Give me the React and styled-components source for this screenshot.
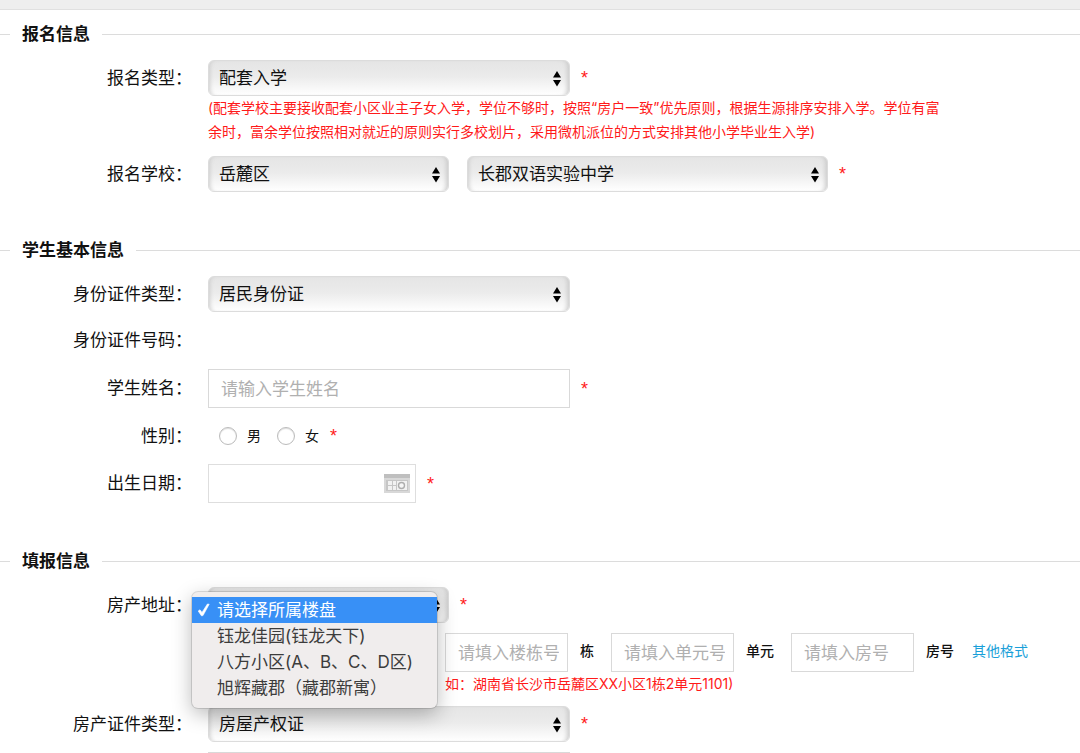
import React, { useState } from 'react';
import styled, { createGlobalStyle } from 'styled-components';

const GlobalStyle = createGlobalStyle`
  * { box-sizing: border-box; }
  html { scrollbar-width: none; }
  body {
    margin: 0;
    background: #fff;
    color: #111;
    font-family: Inter, "Noto Sans CJK SC", sans-serif;
    font-size: 17px;
    line-height: 24px;
  }
  input, select, button { font-family: inherit; }
`;

const Page = styled.main`
  overflow: hidden;
`;

const TopBar = styled.div`
  height: 10px;
  background: #eee;
  border-bottom: 1px solid #e0e0e0;
`;

const Form = styled.form`
  display: flex;
  flex-direction: column;
  gap: 46px;
  padding-top: 12px;
`;

const Section = styled.section`
  display: flex;
  flex-direction: column;
  gap: 14px;
`;

const SectionTitle = styled.h2`
  display: flex;
  align-items: center;
  gap: 12px;
  margin: 0;
  font-size: 17px;
  line-height: 24px;
  font-weight: 700;
  &::before, &::after {
    content: "";
    height: 1px;
    background: #dcdcdc;
  }
  &::before { width: 10px; }
  &::after { flex: 1; }
`;

const Rows = styled.div`
  display: flex;
  flex-direction: column;
  gap: ${p => p.$gap || 12}px;
`;

const Row = styled.div`
  display: grid;
  grid-template-columns: 192px minmax(0, 1fr);
  column-gap: 16px;
`;

const Label = styled.label`
  text-align: right;
  line-height: ${p => p.$height || 36}px;
`;

const Line = styled.div`
  display: flex;
  align-items: center;
  min-height: ${p => p.$height || 36}px;
`;

const Note = styled.p`
  margin: 0;
  padding-left: ${p => p.$indent || 0}px;
  color: #ff1a1a;
  font-size: 14px;
  line-height: 24px;
`;

const Star = styled.span`
  margin-left: 11px;
  color: #ff1a1a;
  font-family: "Liberation Sans", sans-serif;
  font-size: 18px;
  line-height: 24px;
`;

const SelectBox = styled.div`
  position: relative;
  width: ${p => p.$width}px;
  margin-left: ${p => p.$space || 0}px;
`;

const NativeSelect = styled.select`
  appearance: none;
  display: block;
  width: 100%;
  height: 36px;
  padding: 0 30px 1px 10px;
  border: 1px solid #dcdcdc;
  border-radius: 6px;
  background: linear-gradient(#e5e5e5, #ebebeb 45%, #fff);
  box-shadow: inset 4px 0 4px -3px #ccc, inset -5px 0 4px -3px #ccc;
  color: #111;
  font-size: 17px;
`;

const SelectArrows = styled.svg`
  position: absolute;
  right: 9px;
  top: 11px;
  pointer-events: none;
`;

const TextInput = styled.input`
  width: ${p => p.$width}px;
  height: 39px;
  padding: 0 8px 0 12px;
  border: 1px solid #d9d9d9;
  border-radius: 0;
  background: #fff;
  color: #111;
  font-size: 17px;
  &::placeholder { color: #b0b0b0; opacity: 1; }
`;

const DateBox = styled.div`
  display: flex;
  align-items: center;
  width: 208px;
  height: 39px;
  padding-right: 5px;
  border: 1px solid #dedede;
`;

const DateInput = styled.input`
  flex: 1;
  min-width: 0;
  height: 37px;
  padding: 0 12px;
  border: 0;
  background: none;
  font-size: 17px;
`;

const IconButton = styled.button`
  display: flex;
  padding: 0;
  border: 0;
  background: none;
`;

const RadioGroup = styled.div`
  display: flex;
  align-items: center;
  gap: 16px;
  padding-left: 11px;
`;

const RadioLabel = styled.label`
  display: flex;
  align-items: center;
  gap: 10px;
  font-size: 14px;
  line-height: 24px;
`;

const Radio = styled.input`
  appearance: none;
  width: 18px;
  height: 18px;
  margin: 0;
  border: 1px solid #bbb;
  border-radius: 50%;
  background: #fff;
  box-shadow: inset 0 1px 1px #ddd;
  &:checked { background: radial-gradient(#333 35%, #fff 40%); }
`;

const AddressLine = styled.div`
  display: flex;
  align-items: center;
  margin-top: 10px;
`;

const AddressPart = styled.label`
  display: flex;
  align-items: center;
  gap: 12px;
  margin-left: ${p => p.$space}px;
  font-size: 14px;
  font-weight: 500;
  line-height: 24px;
  white-space: nowrap;
`;

const PartName = styled.span`
  padding-bottom: 4px;
`;

const FormatLink = styled.a`
  margin-left: 18px;
  padding-bottom: 4px;
  color: #1a9fd9;
  font-size: 14px;
  text-decoration: none;
  white-space: nowrap;
`;

const Menu = styled.ul`
  position: absolute;
  z-index: 2;
  left: -16px;
  top: 5px;
  width: 245px;
  margin: 0;
  padding: 5px 0 7px;
  border-radius: 6px;
  background: #f0eded;
  box-shadow: 0 0 0 1px rgba(0, 0, 0, 0.12), 0 6px 20px rgba(0, 0, 0, 0.28);
  list-style: none;
`;

const MenuItem = styled.li`
  display: grid;
  grid-template-columns: 14px 1fr;
  column-gap: 6px;
  align-items: center;
  height: 26px;
  padding-left: 5px;
  background: ${p => (p.$active ? '#3890f6' : 'transparent')};
  color: ${p => (p.$active ? '#fff' : '#3c3c3c')};
  font-size: 17px;
  line-height: 24px;
  white-space: nowrap;
`;

const MenuText = styled.span`
  grid-column: 2;
`;

function Select({ id, width, space, options, children, ...rest }) {
  return (
    <SelectBox $width={width} $space={space}>
      <NativeSelect id={id} {...rest}>
        {options.map(o => <option key={o}>{o}</option>)}
      </NativeSelect>
      <SelectArrows width="8" height="16" viewBox="0 0 8 16" aria-hidden="true">
        <path d="M4 0 8 6.5H0ZM0 9h8L4 15.5Z" fill="#000" />
      </SelectArrows>
      {children}
    </SelectBox>
  );
}

const CheckIcon = () => (
  <svg width="14" height="14" viewBox="0 0 14 14" aria-hidden="true">
    <path d="M1.2 8 3 6.8 5 9.4 10.4 1 12.2 1.2 6 12.6 4.4 12.8Z" fill="#fff" stroke="#fff" strokeWidth="0.6" strokeLinejoin="round" />
  </svg>
);

const CalendarIcon = () => (
  <svg width="26" height="19" viewBox="0 0 26 19" aria-hidden="true">
    <rect width="26" height="19" fill="#d8d8d8" />
    <rect width="26" height="4" fill="#bfbfbf" />
    <rect x="2" y="6" width="22" height="11" fill="#c6c6c6" />
    <path d="M4 7h4v4H4zM9 7h3v4H9zM4 12h4v4H4zM9 12h3v4H9zM13 7h10v9H13z" fill="#f2f2f2" />
    <circle cx="17.5" cy="11.5" r="3" fill="#f6f6f6" stroke="#adadad" strokeWidth="1.4" />
  </svg>
);

const estates = [
  '请选择所属楼盘',
  '钰龙佳园(钰龙天下)',
  '八方小区(A、B、C、D区)',
  '旭辉藏郡（藏郡新寓）',
];

export default function App() {
  const [estate, setEstate] = useState(estates[0]);
  return (
    <Page>
      <GlobalStyle />
      <TopBar />
      <Form>
        <Section>
          <SectionTitle>报名信息</SectionTitle>
          <Rows>
            <Row>
              <Label htmlFor="type">报名类型：</Label>
              <div>
                <Line>
                  <Select id="type" width={362} options={['配套入学']} />
                  <Star>*</Star>
                </Line>
                <Note>
                  (配套学校主要接收配套小区业主子女入学，学位不够时，按照“房户一致”优先原则，根据生源排序安排入学。学位有富<br />
                  余时，富余学位按照相对就近的原则实行多校划片，采用微机派位的方式安排其他小学毕业生入学)
                </Note>
              </div>
            </Row>
            <Row>
              <Label htmlFor="district">报名学校：</Label>
              <Line>
                <Select id="district" width={241} options={['岳麓区']} />
                <Select width={361} space={18} options={['长郡双语实验中学']} aria-label="学校" />
                <Star>*</Star>
              </Line>
            </Row>
          </Rows>
        </Section>

        <Section>
          <SectionTitle>学生基本信息</SectionTitle>
          <Rows>
            <Row>
              <Label htmlFor="idType">身份证件类型：</Label>
              <Line>
                <Select id="idType" width={362} options={['居民身份证']} />
              </Line>
            </Row>
            <Row>
              <Label as="span" $height={33}>身份证件号码：</Label>
            </Row>
            <Row>
              <Label htmlFor="name" $height={39}>学生姓名：</Label>
              <Line $height={39}>
                <TextInput id="name" $width={362} placeholder="请输入学生姓名" />
                <Star>*</Star>
              </Line>
            </Row>
            <Row>
              <Label as="span" id="gender" $height={32}>性别：</Label>
              <Line $height={32}>
                <RadioGroup role="radiogroup" aria-labelledby="gender">
                  <RadioLabel><Radio type="radio" name="gender" />男</RadioLabel>
                  <RadioLabel><Radio type="radio" name="gender" />女</RadioLabel>
                </RadioGroup>
                <Star>*</Star>
              </Line>
            </Row>
            <Row>
              <Label htmlFor="birth" $height={39}>出生日期：</Label>
              <Line $height={39}>
                <DateBox>
                  <DateInput id="birth" />
                  <IconButton type="button" aria-label="日历"><CalendarIcon /></IconButton>
                </DateBox>
                <Star>*</Star>
              </Line>
            </Row>
          </Rows>
        </Section>

        <Section>
          <SectionTitle>填报信息</SectionTitle>
          <Rows $gap={10}>
            <Row>
              <Label htmlFor="estate">房产地址：</Label>
              <div>
                <Line>
                  <Select
                    id="estate"
                    width={241}
                    options={estates}
                    value={estate}
                    onChange={e => setEstate(e.target.value)}
                  >
                    <Menu role="listbox" aria-label="楼盘">
                      {estates.map(name => (
                        <MenuItem
                          key={name}
                          role="option"
                          aria-selected={name === estate}
                          $active={name === estate}
                          onClick={() => setEstate(name)}
                        >
                          {name === estate && <CheckIcon />}
                          <MenuText>{name}</MenuText>
                        </MenuItem>
                      ))}
                    </Menu>
                  </Select>
                  <Star>*</Star>
                </Line>
                <AddressLine>
                  <TextInput $width={222} aria-label="地址" />
                  <AddressPart $space={15}>
                    <TextInput $width={123} placeholder="请填入楼栋号" />
                    <PartName>栋</PartName>
                  </AddressPart>
                  <AddressPart $space={17}>
                    <TextInput $width={123} placeholder="请填入单元号" />
                    <PartName>单元</PartName>
                  </AddressPart>
                  <AddressPart $space={17}>
                    <TextInput $width={123} placeholder="请填入房号" />
                    <PartName>房号</PartName>
                  </AddressPart>
                  <FormatLink href="#format">其他格式</FormatLink>
                </AddressLine>
                <Note $indent={237}>如：湖南省长沙市岳麓区XX小区1栋2单元1101)</Note>
              </div>
            </Row>
            <Row>
              <Label htmlFor="deedType">房产证件类型：</Label>
              <Line>
                <Select id="deedType" width={362} options={['房屋产权证']} />
                <Star>*</Star>
              </Line>
            </Row>
            <Row>
              <span />
              <Line $height={39}>
                <TextInput $width={362} aria-label="证件号" />
              </Line>
            </Row>
          </Rows>
        </Section>
      </Form>
    </Page>
  );
}
